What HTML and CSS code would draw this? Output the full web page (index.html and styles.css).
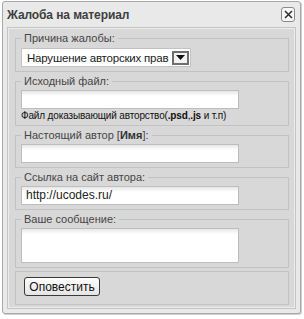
FILE: index.html
```html
<!DOCTYPE html>
<html lang="ru">
<head>
<meta charset="utf-8">
<title>Жалоба на материал</title>
<link rel="stylesheet" href="styles.css">
</head>
<body>
<div class="dialog">
  <div class="titlebar">
    <span class="title">Жалоба на материал</span>
    <span class="close"><svg width="9" height="9" viewBox="0 0 9 9"><path d="M1 1 L8 8 M8 1 L1 8" stroke="#2f2f2f" stroke-width="1.5" fill="none"/></svg></span>
  </div>
  <div class="panel">
    <fieldset class="fs fs-reason">
      <legend>Причина жалобы:</legend>
      <div class="select">
        <span class="select-text">Нарушение авторских прав</span>
        <span class="select-btn"><svg width="9" height="5" viewBox="0 0 9 5"><path d="M0 0 H9 L4.5 5 Z" fill="#111"/></svg></span>
      </div>
    </fieldset>
    <fieldset class="fs fs-file">
      <legend>Исходный файл:</legend>
      <div class="field"></div>
      <div class="note">Файл доказывающий авторство(<b>.psd</b>,<b>.js</b> и т.п)</div>
    </fieldset>
    <fieldset class="fs">
      <legend>Настоящий автор [<b>Имя</b>]:</legend>
      <div class="field"></div>
    </fieldset>
    <fieldset class="fs">
      <legend>Ссылка на сайт автора:</legend>
      <div class="field">http://ucodes.ru/</div>
    </fieldset>
    <fieldset class="fs fs-msg">
      <legend>Ваше сообщение:</legend>
      <div class="field area"></div>
    </fieldset>
    <fieldset class="fs fs-submit">
      <button class="btn" type="button">Оповестить</button>
    </fieldset>
  </div>
</div>
</body>
</html>
```
FILE: styles.css
```css
html, body {
  margin: 0;
  padding: 0;
  background: #ffffff;
}
body {
  width: 304px;
  height: 319px;
  overflow: hidden;
  font-family: "Liberation Sans", Arial, sans-serif;
}
.dialog {
  box-sizing: border-box;
  margin: 1px 0 0 2px;
  width: 299px;
  height: 313px;
  border: 1px solid #a8a8a8;
  border-radius: 3px;
  background: #e9e9e9;
  box-shadow: 1px 1px 0 #d0d0d0;
}
.titlebar {
  height: 25px;
  display: flex;
  align-items: center;
  justify-content: space-between;
  padding: 0 5px 0 4px;
}
.title {
  font-weight: bold;
  font-size: 12px;
  letter-spacing: -0.1px;
  color: #3e3e3e;
}
.close {
  box-sizing: border-box;
  width: 14px;
  height: 15px;
  border: 1px solid #8a8a8a;
  border-radius: 3px;
  background: #f7f7f7;
  display: flex;
  align-items: center;
  justify-content: center;
}
.panel {
  box-sizing: border-box;
  margin-left: 4px;
  width: 289px;
  height: 282px;
  border: 1px solid #c4c4c4;
  background: #d8d8d8;
  box-shadow: inset 1px 1px 0 #ececec, inset -1px -1px 0 #ececec;
  padding: 4px 6px 4px 7px;
  display: flex;
  flex-direction: column;
}
.fs {
  margin: 0 0 3px;
  padding: 3px 5px 4px;
  border: 1px solid #c2c2c2;
  min-width: 0;
}
.fs legend {
  padding: 0 3px;
  font-size: 11px;
  line-height: 12px;
  color: #454545;
}
.fs legend b {
  color: #333;
}
.select {
  box-sizing: border-box;
  margin-top: 1px;
  width: 170px;
  height: 19px;
  border: 1px solid #c3c3c3;
  background: #ffffff;
  display: flex;
  align-items: center;
  justify-content: space-between;
  padding: 0 1px 0 5px;
}
.select-text {
  font-size: 11.5px;
  letter-spacing: -0.2px;
  white-space: nowrap;
  color: #222;
}
.select-btn {
  box-sizing: border-box;
  width: 17px;
  height: 14px;
  border: 2px solid #6e6e6e;
  background: #f2f2f2;
  display: flex;
  align-items: center;
  justify-content: center;
}
.field {
  box-sizing: border-box;
  width: 218px;
  height: 19px;
  border: 1px solid #bdbdbd;
  background: linear-gradient(#e6e6e6, #ffffff 5px);
  font-size: 12px;
  line-height: 17px;
  color: #222;
  padding-left: 4px;
}
.area {
  height: 35px;
}
.note {
  margin-top: 1px;
  font-size: 10px;
  line-height: 12px;
  color: #111;
  letter-spacing: -0.15px;
}
.fs-file {
  padding-bottom: 3px;
}
.fs-submit {
  padding: 5px 5px 8px 8px;
  margin-bottom: 0;
}
.btn {
  box-sizing: border-box;
  width: 76px;
  height: 19px;
  border: 1px solid #3a3a3a;
  border-radius: 3px;
  background: linear-gradient(#ffffff, #e4e4e4);
  font-family: "Liberation Sans", Arial, sans-serif;
  font-size: 12px;
  color: #111;
  padding: 0;
  display: block;
}
```
